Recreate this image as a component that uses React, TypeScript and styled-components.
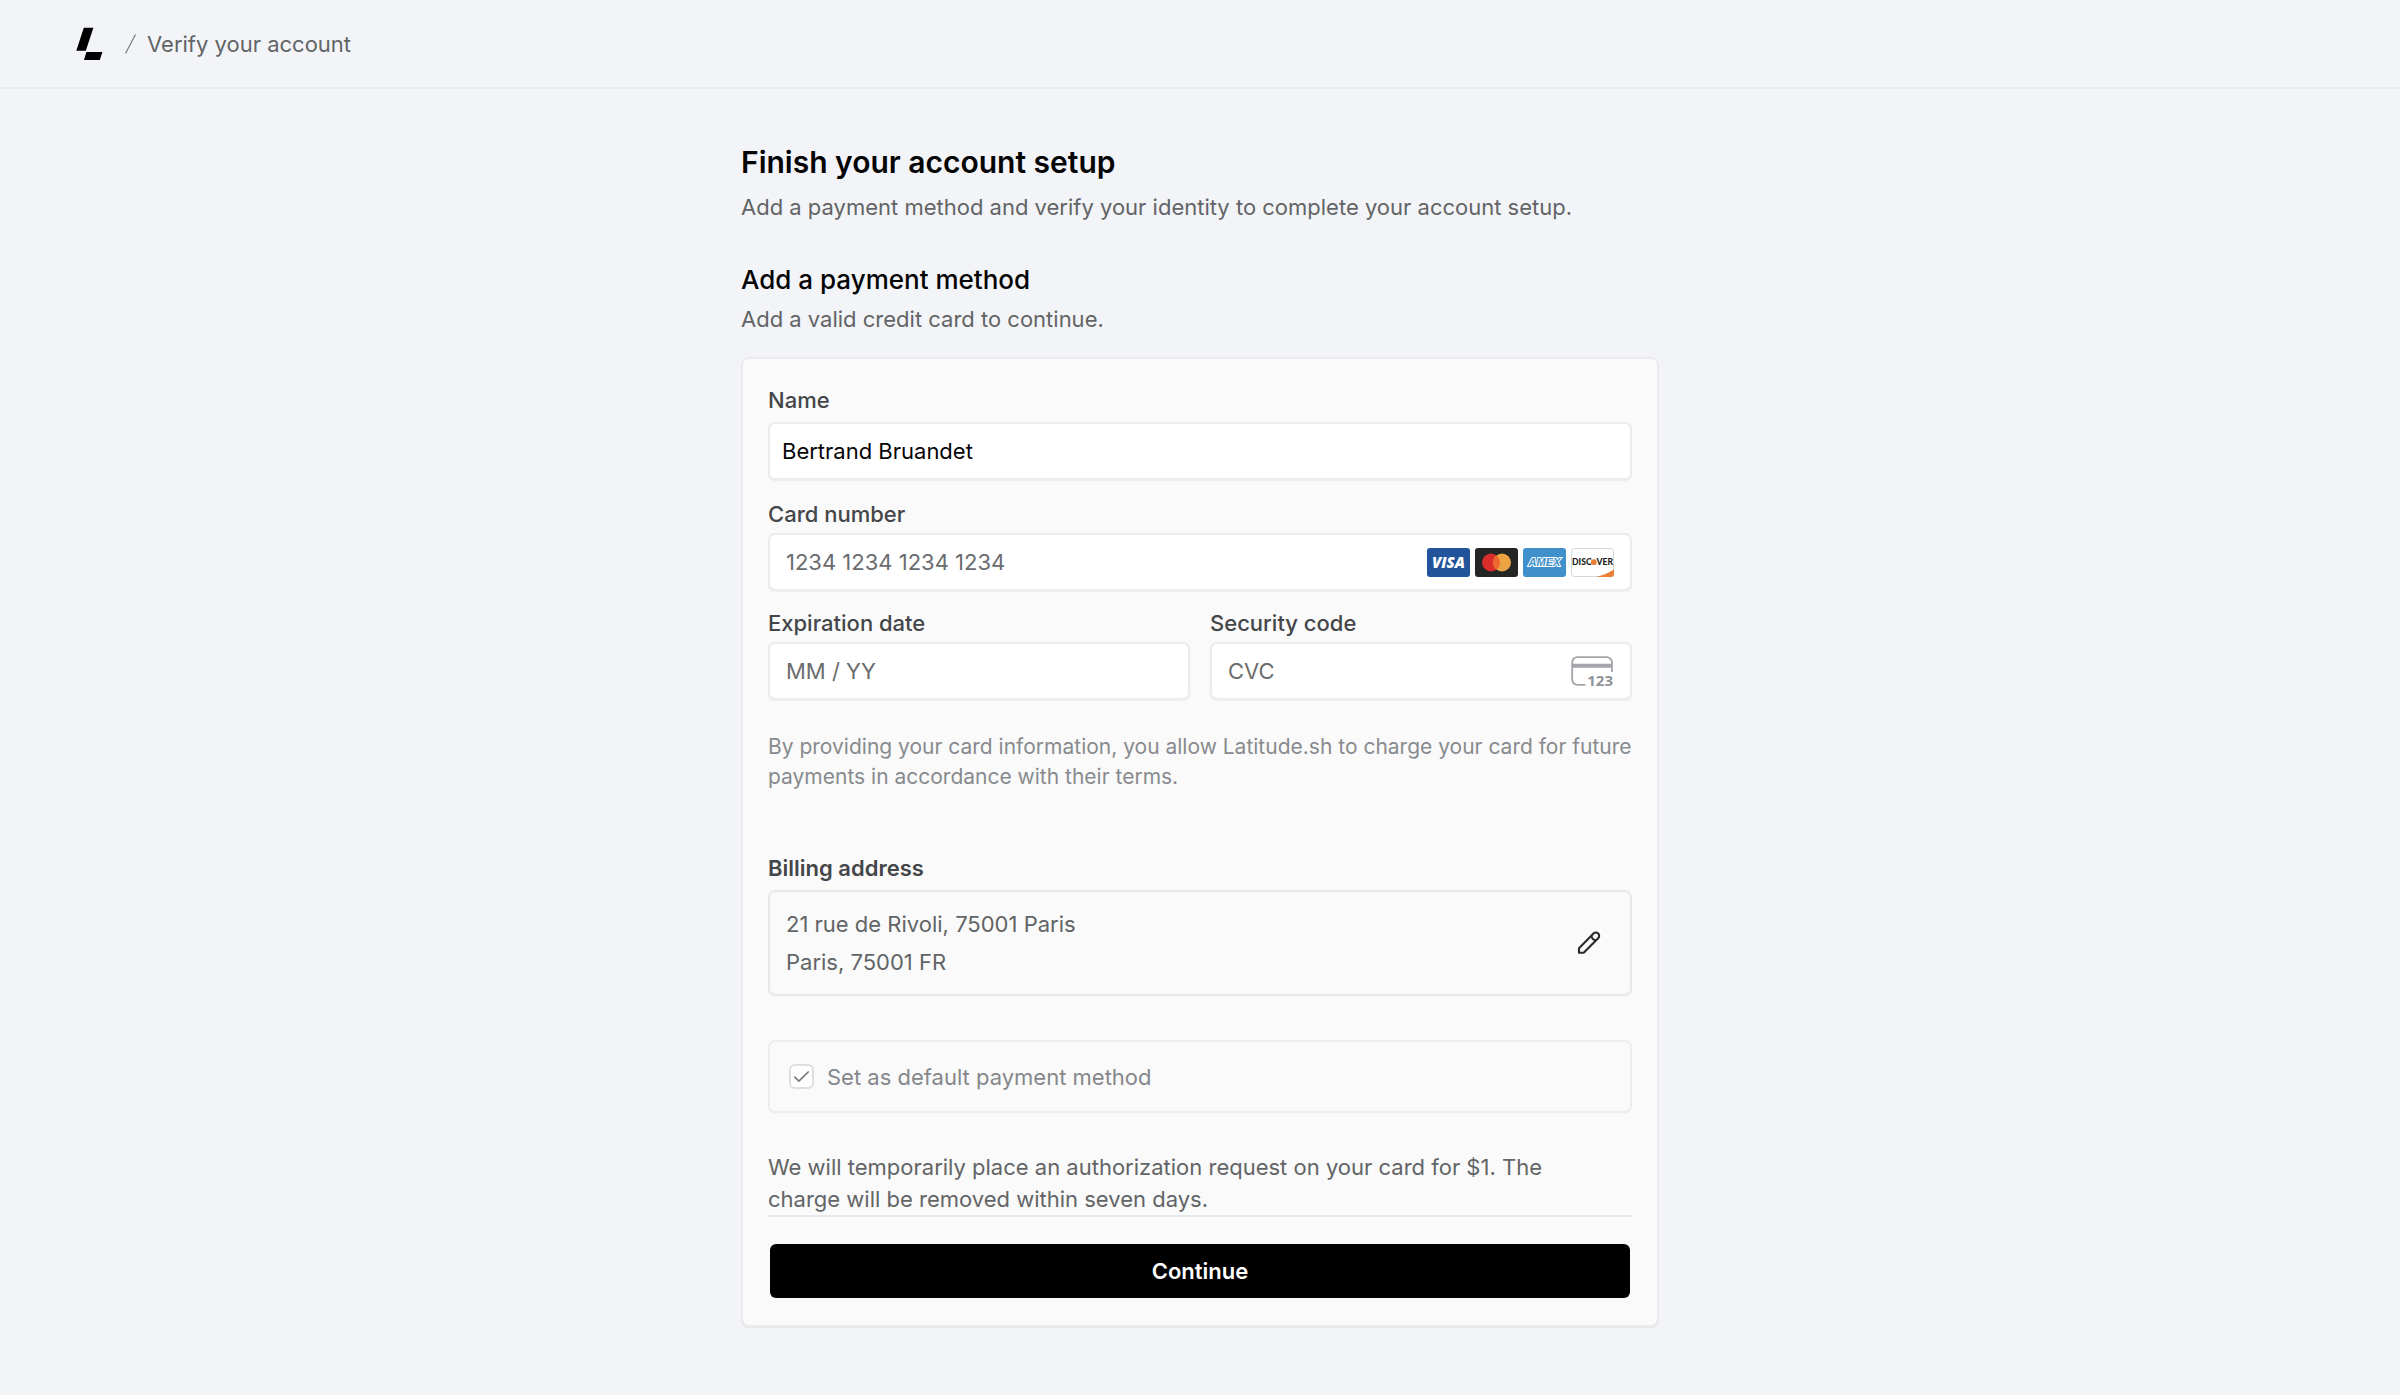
import React from "react";
import styled, { createGlobalStyle } from "styled-components";

const GlobalStyle = createGlobalStyle`
  *, *::before, *::after { box-sizing: border-box; }
  body {
    margin: 0;
    background: #f3f4f8;
    color: #626466;
    font-family: Inter, "Liberation Sans", sans-serif;
    font-size: 22px;
    line-height: 32px;
    -webkit-font-smoothing: antialiased;
  }
  h1, h2, p, address { margin: 0; font-style: normal; }
  input, button { font: inherit; }
`;

const Header = styled.header`
  display: flex;
  align-items: center;
  height: 89px;
  padding: 0 76px;
  border-bottom: 2px solid #e9eaec;
`;

const HomeLink = styled.a`
  display: flex;
  margin-right: 21px;
`;

const Crumb = styled.span`
  margin-left: 10px;
`;

const Main = styled.main`
  width: 100%;
  max-width: 918px;
  margin: 0 auto;
  padding: 53px 0 68px;
`;

const Title = styled.h1`
  color: #050506;
  font-size: 30px;
  line-height: 40px;
  font-weight: 600;
`;

const Lead = styled.p`
  margin-top: 9px;
`;

const SectionTitle = styled.h2`
  margin-top: 41px;
  color: #050506;
  font-size: 26px;
  line-height: 32px;
  font-weight: 500;
`;

const SectionLead = styled.p`
  margin-top: 7px;
`;

const Card = styled.form`
  display: flex;
  flex-direction: column;
  margin-top: 22px;
  padding: 25px;
  background: #fafafa;
  border: 2px solid #ececed;
  border-radius: 8px;
  box-shadow: 0 1px 1px rgba(0, 0, 0, 0.06);
`;

const Field = styled.div<{ $gap: number; $top?: number }>`
  display: flex;
  flex: 1;
  min-width: 0;
  flex-direction: column;
  gap: ${(p) => p.$gap}px;
  margin-top: ${(p) => p.$top ?? 0}px;
`;

const FieldRow = styled.div`
  display: flex;
  gap: 20px;
  margin-top: 16px;
`;

const Label = styled.label`
  color: #444649;
  font-weight: 500;
`;

const InputBox = styled.div<{ $pad: number }>`
  display: flex;
  align-items: center;
  height: 58px;
  padding: 0 ${(p) => p.$pad}px;
  background: #fff;
  border: 2px solid #ececec;
  border-radius: 7px;
  box-shadow: 0 1px 2px rgba(0, 0, 0, 0.06);
`;

const TextInput = styled.input`
  flex: 1;
  min-width: 0;
  height: 100%;
  padding: 0;
  border: 0;
  outline: 0;
  background: transparent;
  color: #050506;
  &::placeholder { color: #6b6c6e; opacity: 1; }
`;

const Brands = styled.div`
  display: flex;
  gap: 5px;
`;

const Terms = styled.p`
  margin-top: 32px;
  color: #888a8e;
  font-size: 21px;
  line-height: 30px;
`;

const BillingTitle = styled.h2`
  margin-top: 60px;
  color: #444649;
  font-size: 22px;
  line-height: 32px;
  font-weight: 600;
`;

const AddressBox = styled.div`
  display: flex;
  align-items: center;
  justify-content: space-between;
  margin-top: 6px;
  padding: 13px 29px 13px 16px;
  border: 2px solid #e7e8eb;
  border-radius: 7px;
`;

const Address = styled.address`
  line-height: 38px;
`;

const EditButton = styled.button`
  display: flex;
  padding: 0;
  border: 0;
  background: transparent;
  cursor: pointer;
`;

const DefaultBox = styled.label`
  display: flex;
  align-items: center;
  gap: 13px;
  height: 73px;
  margin-top: 44px;
  padding: 0 19px;
  border: 2px solid #ededed;
  border-radius: 7px;
  color: #85878b;
`;

const CheckHolder = styled.span`
  display: grid;
  & > * { grid-area: 1 / 1; }
`;

const CheckInput = styled.input`
  appearance: none;
  width: 25px;
  height: 25px;
  margin: 0;
  background: #fff;
  border: 2px solid #dedfe0;
  border-radius: 6px;
`;

const Notice = styled.p`
  margin-top: 38px;
  padding-right: 32px;
`;

const Actions = styled.div`
  display: flex;
  border-top: 2px solid #e7e8e9;
  padding: 27px 2px 2px;
`;

const Submit = styled.button`
  flex: 1;
  height: 54px;
  padding: 0;
  border: 0;
  border-radius: 6px;
  background: #000;
  color: #fff;
  font-weight: 600;
  cursor: pointer;
`;

const Logo = () => (
  <svg width="27" height="34" viewBox="0 0 27 34" aria-hidden="true">
    <path d="M7.8 .8H17.4L9.8 23.8H.3ZM10.4 25H26.4L23.8 33H8Z" fill="#000" />
  </svg>
);

const Slash = () => (
  <svg width="13" height="22" viewBox="0 0 13 22" aria-hidden="true">
    <path d="M1.5 20.5L11.5 1.5" stroke="#77797b" strokeWidth="1.2" />
  </svg>
);

const Visa = () => (
  <svg width="43" height="29" viewBox="0 0 43 29" role="img" aria-label="Visa">
    <rect width="43" height="29" rx="3" fill="#22539b" />
    <text x="21.5" y="20" textAnchor="middle" fill="#fff" fontFamily="Open Sans, sans-serif" fontWeight="800" fontStyle="italic" fontSize="15">VISA</text>
  </svg>
);

const Mastercard = () => (
  <svg width="43" height="29" viewBox="0 0 43 29" role="img" aria-label="Mastercard">
    <rect width="43" height="29" rx="3" fill="#242625" />
    <circle cx="16" cy="14.5" r="9" fill="#da2d2b" />
    <circle cx="27" cy="14.5" r="9" fill="#eba343" />
    <path d="M21.5 7.4a9 9 0 0 1 0 14.2a9 9 0 0 1 0-14.2z" fill="#ec682c" />
  </svg>
);

const Amex = () => (
  <svg width="43" height="29" viewBox="0 0 43 29" role="img" aria-label="American Express">
    <rect width="43" height="29" rx="3" fill="#4090cb" />
    <text x="21.5" y="18" textAnchor="middle" fill="#4090cb" stroke="#fff" strokeWidth="2" paintOrder="stroke" fontFamily="Liberation Sans, sans-serif" fontWeight="700" fontStyle="italic" fontSize="11">AMEX</text>
  </svg>
);

const Discover = () => (
  <svg width="43" height="29" viewBox="0 0 43 29" role="img" aria-label="Discover">
    <rect x=".5" y=".5" width="42" height="28" rx="3" fill="#fff" stroke="#d5d6d7" />
    <path d="M25 29Q36 26 43 21.5V26a3 3 0 0 1-3 3Z" fill="#e87f35" />
    <text x="1" y="17.3" fill="#1d1d1d" fontFamily="Lato, sans-serif" fontWeight="900" fontSize="8.6">DISC</text>
    <circle cx="22.8" cy="14.2" r="2.9" fill="#e87f35" />
    <text x="42" y="17.3" textAnchor="end" fill="#1d1d1d" fontFamily="Lato, sans-serif" fontWeight="900" fontSize="8.6">VER</text>
  </svg>
);

const CvcIcon = () => (
  <svg width="43" height="40" viewBox="0 -4 43 40" aria-hidden="true">
    <path d="M14.5 29.8H6.5A5.3 5.3 0 0 1 1.2 24.5V7.5A5.3 5.3 0 0 1 6.5 2.2H35.7A5.3 5.3 0 0 1 41 7.5V17" fill="none" stroke="#a2a5a9" strokeWidth="1.8" />
    <path d="M1.2 10.7H41" stroke="#a2a5a9" strokeWidth="4" />
    <text x="42" y="30.6" textAnchor="end" fill="#8f9296" fontFamily="Noto Sans, sans-serif" fontWeight="700" fontSize="15">123</text>
  </svg>
);

const Pencil = () => (
  <svg width="24" height="24" viewBox="0 0 24 24" fill="none" stroke="#2a2b2d" strokeWidth="2.1" strokeLinejoin="round" aria-hidden="true">
    <path d="M2 21.8V17.2L16.5 2.6A3.32 3.32 0 0 1 21.2 7.3L6.7 21.8Z" />
    <path d="M14.4 4.8C14.8 7.2 16.6 9 19 9.4" />
  </svg>
);

const CheckMark = () => (
  <svg width="25" height="25" viewBox="0 0 25 25" fill="none" aria-hidden="true">
    <path d="M5.8 13.2L9.9 17.2L19.2 8" stroke="#777a7c" strokeWidth="1.7" strokeLinecap="round" strokeLinejoin="round" />
  </svg>
);

export default function App() {
  return (
    <>
      <GlobalStyle />
      <Header>
        <HomeLink href="#" aria-label="Latitude.sh">
          <Logo />
        </HomeLink>
        <Slash />
        <Crumb>Verify your account</Crumb>
      </Header>
      <Main>
        <Title>Finish your account setup</Title>
        <Lead>Add a payment method and verify your identity to complete your account setup.</Lead>
        <SectionTitle>Add a payment method</SectionTitle>
        <SectionLead>Add a valid credit card to continue.</SectionLead>
        <Card onSubmit={(e) => e.preventDefault()}>
          <Field $gap={6}>
            <Label htmlFor="name">Name</Label>
            <InputBox $pad={12}>
              <TextInput id="name" defaultValue="Bertrand Bruandet" />
            </InputBox>
          </Field>
          <Field $gap={3} $top={18}>
            <Label htmlFor="number">Card number</Label>
            <InputBox $pad={16}>
              <TextInput id="number" inputMode="numeric" placeholder="1234 1234 1234 1234" />
              <Brands>
                <Visa />
                <Mastercard />
                <Amex />
                <Discover />
              </Brands>
            </InputBox>
          </Field>
          <FieldRow>
            <Field $gap={3}>
              <Label htmlFor="expiry">Expiration date</Label>
              <InputBox $pad={16}>
                <TextInput id="expiry" inputMode="numeric" placeholder="MM / YY" />
              </InputBox>
            </Field>
            <Field $gap={3}>
              <Label htmlFor="cvc">Security code</Label>
              <InputBox $pad={16}>
                <TextInput id="cvc" inputMode="numeric" placeholder="CVC" />
                <CvcIcon />
              </InputBox>
            </Field>
          </FieldRow>
          <Terms>
            By providing your card information, you allow Latitude.sh to charge your card for future
            payments in accordance with their terms.
          </Terms>
          <BillingTitle>Billing address</BillingTitle>
          <AddressBox>
            <Address>
              21 rue de Rivoli, 75001 Paris
              <br />
              Paris, 75001 FR
            </Address>
            <EditButton type="button" aria-label="Edit billing address">
              <Pencil />
            </EditButton>
          </AddressBox>
          <DefaultBox htmlFor="default">
            <CheckHolder>
              <CheckInput id="default" type="checkbox" defaultChecked disabled />
              <CheckMark />
            </CheckHolder>
            Set as default payment method
          </DefaultBox>
          <Notice>
            We will temporarily place an authorization request on your card for $1. The charge will
            be removed within seven days.
          </Notice>
          <Actions>
            <Submit type="submit">Continue</Submit>
          </Actions>
        </Card>
      </Main>
    </>
  );
}
